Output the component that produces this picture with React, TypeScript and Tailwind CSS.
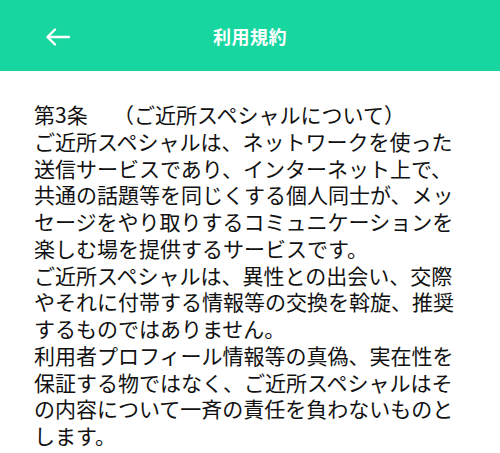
import React from 'react';

const lines = [
  'ご近所スペシャルは、ネットワークを使った',
  '送信サービスであり、インターネット上で、',
  '共通の話題等を同じくする個人同士が、メッ',
  'セージをやり取りするコミュニケーションを',
  '楽しむ場を提供するサービスです。',
  'ご近所スペシャルは、異性との出会い、交際',
  'やそれに付帯する情報等の交換を斡旋、推奨',
  'するものではありません。',
  '利用者プロフィール情報等の真偽、実在性を',
  '保証する物ではなく、ご近所スペシャルはそ',
  'の内容について一斉の責任を負わないものと',
  'します。',
];

const App: React.FC = () => {
  return (
    <div className="w-[500px] h-[453px] bg-white overflow-hidden" style={{ fontFamily: '"Noto Sans CJK JP", "Noto Sans", sans-serif' }}>
      {/* Header */}
      <header className="relative h-[71px] bg-[#17d6a0] flex items-center justify-center">
        <button className="absolute left-[46px] top-[28px] text-white" aria-label="back">
          <svg width="24" height="18" viewBox="0 0 24 18" fill="none" stroke="white" strokeWidth="2.4" strokeLinecap="round" strokeLinejoin="round">
            <path d="M23 9H2" />
            <path d="M9 1.5L1.5 9L9 16.5" />
          </svg>
        </button>
        <h1 className="text-white font-bold text-[18px] tracking-[0.5px] mt-[2px]">利用規約</h1>
      </header>

      {/* Body */}
      <div className="pl-[34px] pt-[30px] text-[21px] leading-[26.75px] text-[#111]">
        <p className="whitespace-nowrap">
          <span className="inline-block w-[79px]">第3条</span>
          <span>（ご近所スペシャルについて）</span>
        </p>
        {lines.map((l, i) => (
          <p key={i} className="whitespace-nowrap">{l}</p>
        ))}
      </div>
    </div>
  );
};

export default App;
